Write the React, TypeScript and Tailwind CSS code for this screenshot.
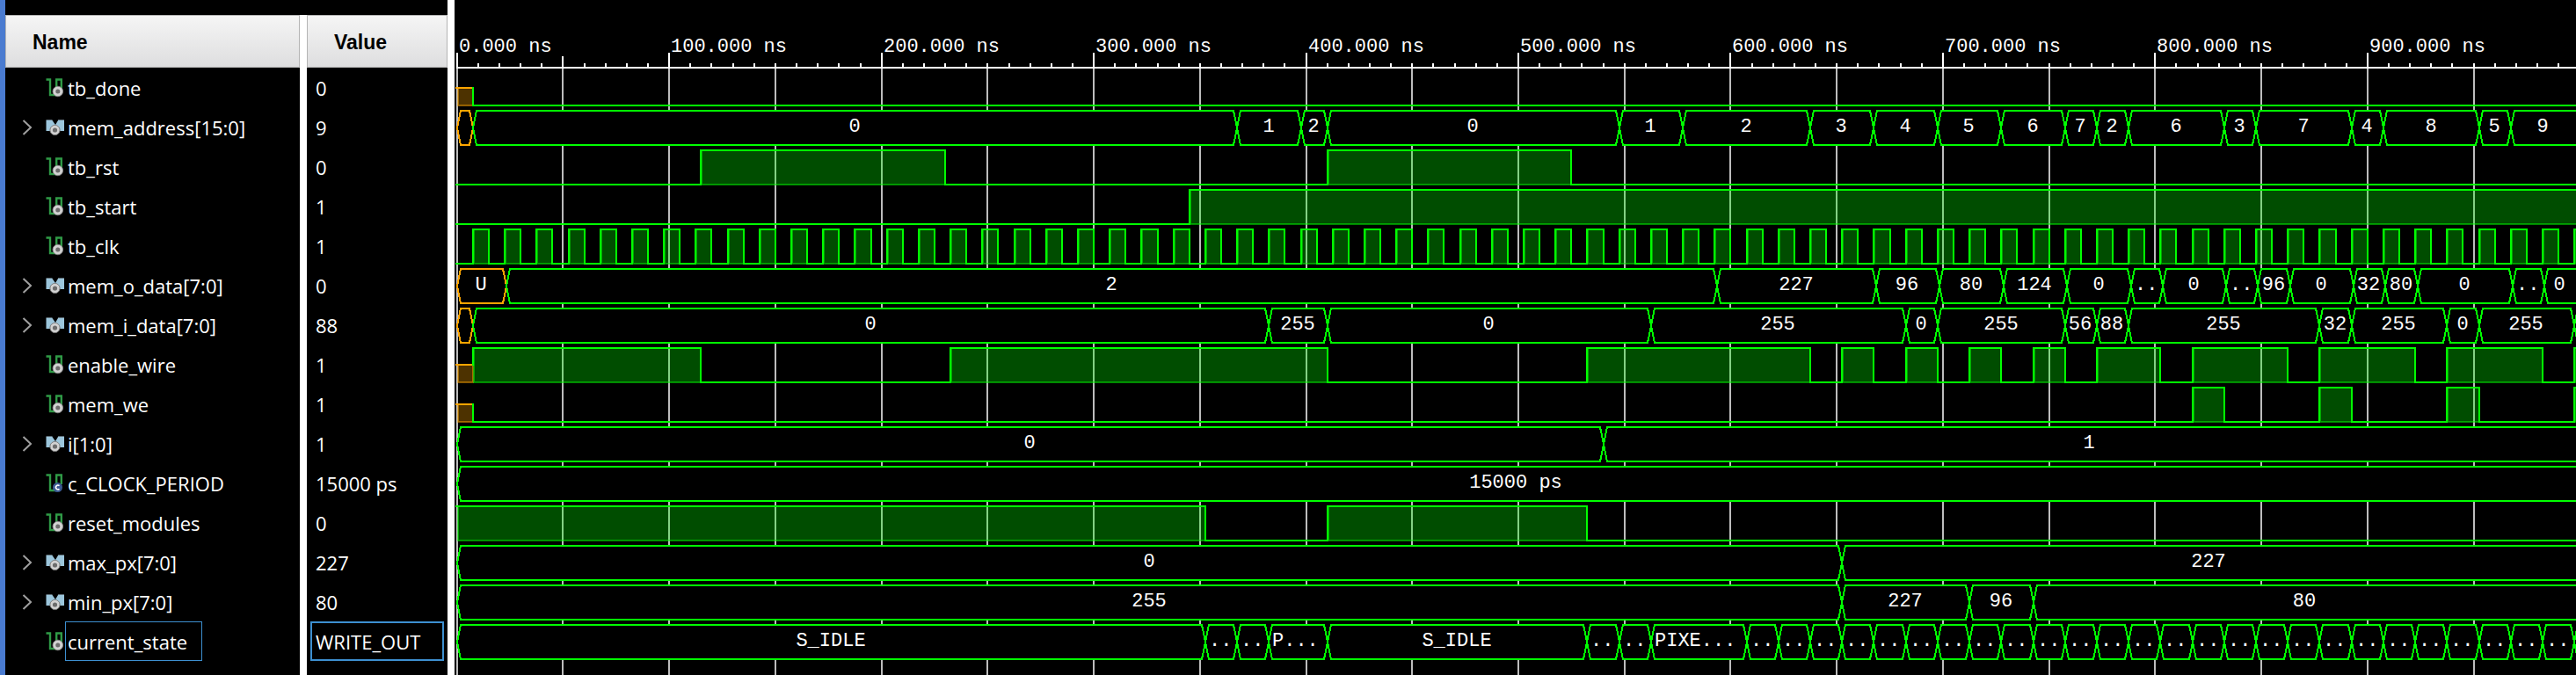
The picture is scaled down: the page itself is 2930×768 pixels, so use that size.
import { useEffect, useRef, useState } from "react";

type Kind = "bit" | "bus" | "const";
type Step = [time: number, value: string];

interface Signal {
  name: string;
  value: string;
  kind: Kind;
  wave: "level" | "bus";
  steps: Step[];
}

const ROW = 45;
const HEAD = 77;
const ORIGIN = 3;
const PX_PER_NS = 2.4145;
const CHAR = 13;

const clock: Step[] = [[0, "0"]];
for (let t = 7.5; t < 1600; t += 15) {
  clock.push([t, "1"], [t + 7.5, "0"]);
}

const states: Step[] = [
  [0, "S_IDLE"],
  [352.5, ".."],
  [367.5, ".."],
  [382.5, "P..."],
  [410, "S_IDLE"],
  [532.5, ".."],
  [547.5, ".."],
  [562.5, "PIXE..."],
];
for (let t = 607.5; t < 1600; t += 15) states.push([t, ".."]);

const signals: Signal[] = [
  { name: "tb_done", value: "0", kind: "bit", wave: "level", steps: [[0, "U"], [7.5, "0"]] },
  {
    name: "mem_address[15:0]", value: "9", kind: "bus", wave: "bus",
    steps: [
      [0, "U"], [7.5, "0"], [367.5, "1"], [397.5, "2"], [410, "0"], [547.5, "1"], [577.5, "2"],
      [637.5, "3"], [667.5, "4"], [697.5, "5"], [727.5, "6"], [757.5, "7"], [772.5, "2"], [787.5, "6"],
      [832.5, "3"], [847.5, "7"], [892.5, "4"], [907.5, "8"], [952.5, "5"], [967.5, "9"],
    ],
  },
  { name: "tb_rst", value: "0", kind: "bit", wave: "level", steps: [[0, "0"], [115, "1"], [230, "0"], [410, "1"], [525, "0"]] },
  { name: "tb_start", value: "1", kind: "bit", wave: "level", steps: [[0, "0"], [345, "1"]] },
  { name: "tb_clk", value: "1", kind: "bit", wave: "level", steps: clock },
  {
    name: "mem_o_data[7:0]", value: "0", kind: "bus", wave: "bus",
    steps: [
      [0, "U"], [23.5, "2"], [593.5, "227"], [668.5, "96"], [698.5, "80"], [728.5, "124"], [758.5, "0"],
      [788.5, ".."], [803.5, "0"], [833.5, ".."], [848.5, "96"], [863.5, "0"], [893.5, "32"],
      [908.5, "80"], [923.5, "0"], [968.5, ".."], [983.5, "0"],
    ],
  },
  {
    name: "mem_i_data[7:0]", value: "88", kind: "bus", wave: "bus",
    steps: [
      [0, "U"], [7.5, "0"], [382.5, "255"], [410, "0"], [562.5, "255"], [682.5, "0"], [697.5, "255"],
      [757.5, "56"], [772.5, "88"], [787.5, "255"], [877.5, "32"], [892.5, "255"], [937.5, "0"],
      [952.5, "255"], [997.5, "88"],
    ],
  },
  {
    name: "enable_wire", value: "1", kind: "bit", wave: "level",
    steps: [
      [0, "U"], [7.5, "1"], [115, "0"], [232.5, "1"], [410, "0"], [532.5, "1"], [637.5, "0"], [652.5, "1"],
      [667.5, "0"], [682.5, "1"], [697.5, "0"], [712.5, "1"], [727.5, "0"], [742.5, "1"], [757.5, "0"],
      [772.5, "1"], [802.5, "0"], [817.5, "1"], [862.5, "0"], [877.5, "1"], [922.5, "0"], [937.5, "1"],
      [982.5, "0"], [997.5, "1"],
    ],
  },
  {
    name: "mem_we", value: "1", kind: "bit", wave: "level",
    steps: [
      [0, "U"], [7.5, "0"], [817.5, "1"], [832.5, "0"], [877.5, "1"], [892.5, "0"], [937.5, "1"],
      [952.5, "0"], [997.5, "1"],
    ],
  },
  { name: "i[1:0]", value: "1", kind: "bus", wave: "bus", steps: [[0, "0"], [540, "1"]] },
  { name: "c_CLOCK_PERIOD", value: "15000 ps", kind: "const", wave: "bus", steps: [[0, "15000 ps"]] },
  { name: "reset_modules", value: "0", kind: "bit", wave: "level", steps: [[0, "1"], [352.5, "0"], [410, "1"], [532.5, "0"]] },
  { name: "max_px[7:0]", value: "227", kind: "bus", wave: "bus", steps: [[0, "0"], [652.5, "227"]] },
  { name: "min_px[7:0]", value: "80", kind: "bus", wave: "bus", steps: [[0, "255"], [652.5, "227"], [712.5, "96"], [742.5, "80"]] },
  { name: "current_state", value: "WRITE_OUT", kind: "bit", wave: "bus", steps: states },
];

const xOf = (ns: number) => Math.floor(ORIGIN + ns * PX_PER_NS + 0.25);

function SignalIcon({ kind }: { kind: Kind }) {
  if (kind === "bus") {
    return (
      <svg viewBox="0 0 22 22" className="h-[22px] w-[22px] shrink-0" aria-hidden="true">
        <path d="M.5 3h7l3.500 5L14 3h7v12h-4.500L10.500 9 5 15H.5Z" fill="#9cc6dc" />
        <path d="M.5 2.500H7.500M14 2.500h7" stroke="#5c6b74" strokeWidth="1.200" />
        <circle cx="10.500" cy="14" r="5.600" fill="#d2d2d2" stroke="#7e7e7e" strokeWidth="1" />
        <circle cx="10.500" cy="14" r="2.600" fill="#6c6c6c" />
      </svg>
    );
  }
  return (
    <svg viewBox="0 0 22 22" className="h-[22px] w-[22px] shrink-0" aria-hidden="true">
      <path d="M.5 1.500H5V19h7.200V1.500h5.600V12" fill="none" stroke="#2f9a46" strokeWidth="2.400" />
      {kind === "const" ? (
        <>
          <circle cx="13.500" cy="15.500" r="5.500" fill="#3b5a92" />
          <path d="M15.500 13.700a2.400 2.400 0 1 0 0 3.600" fill="none" stroke="#fff" strokeWidth="1.600" />
        </>
      ) : (
        <>
          <circle cx="13.800" cy="15" r="5.800" fill="#d2d2d2" stroke="#8a8a8a" strokeWidth=".8" />
          <circle cx="13.800" cy="15" r="2.500" fill="#6c6c6c" />
        </>
      )}
    </svg>
  );
}

function LevelWave({ steps, top, width }: { steps: Step[]; top: number; width: number }) {
  const levels: Record<string, number> = { "0": top + 43, U: top + 23, "1": top + 4 };
  const low = levels["0"];
  return (
    <g>
      {steps.map(([t, v], n) => {
        const x1 = xOf(t);
        if (x1 > width) return null;
        const x2 = n + 1 < steps.length ? xOf(steps[n + 1][0]) : width + 10;
        const y = levels[v];
        const color = v === "U" ? "#ffa500" : "#00ff00";
        const prev = n > 0 ? levels[steps[n - 1][1]] : y;
        return (
          <g key={t} stroke={color} strokeWidth="2">
            {v !== "0" && (
              <rect x={x1 + 1} y={y} width={x2 - x1 - 1} height={low - y} fill={color} fillOpacity=".3" strokeOpacity=".5" />
            )}
            <path d={`M${n > 0 ? x1 : x1 - 1} ${prev}V${y}H${x2}`} fill="none" strokeLinejoin="miter" strokeLinecap="square" />
          </g>
        );
      })}
    </g>
  );
}

function BusWave({ steps, top, width }: { steps: Step[]; top: number; width: number }) {
  const hi = top + 4;
  const lo = top + 43;
  const mid = (hi + lo) / 2;
  return (
    <g shapeRendering="crispEdges">
      {steps.map(([t, v], n) => {
        const x1 = xOf(t);
        if (x1 > width) return null;
        const x2 = n + 1 < steps.length ? xOf(steps[n + 1][0]) : width + 20;
        const seen = Math.min(x2, width) - x1;
        const cut = v.endsWith("..");
        const fits = seen > v.length * CHAR + 6;
        return (
          <g key={t}>
            <path
              d={`M${x1} ${mid}L${x1 + 4} ${hi}H${x2 - 4}L${x2} ${mid}L${x2 - 4} ${lo}H${x1 + 4}Z`}
              fill="#000"
              stroke={v === "U" ? "#ffa500" : "#00ff00"}
              strokeWidth="2"
            />
            {fits && (
              <text
                x={cut ? x1 + 4 : x1 - 1 + Math.round(seen / 2)}
                y={top + 28}
                textAnchor={cut ? "start" : "middle"}
              >
                {v}
              </text>
            )}
          </g>
        );
      })}
    </g>
  );
}

function WavePane() {
  const box = useRef<HTMLElement>(null);
  const [width, setWidth] = useState(2413);

  useEffect(() => {
    const el = box.current;
    if (!el) return;
    const watch = new ResizeObserver(() => setWidth(el.clientWidth));
    watch.observe(el);
    return () => watch.disconnect();
  }, []);

  const ticks: number[] = [];
  for (let t = 0; xOf(t) <= width; t += 10) ticks.push(t);

  return (
    <section ref={box} aria-label="Waveforms" className="min-w-0 flex-1 overflow-hidden bg-black">
      <svg className="block h-full w-full fill-white font-['Liberation_Mono',monospace] text-[22px]">
        {ticks.filter((t) => t % 50 === 0).map((t) => (
          <line key={t} x1={xOf(t)} x2={xOf(t)} y1={HEAD} y2="100%" stroke="#bdbdbd" strokeWidth="2" />
        ))}
        {ticks.map((t) => (
          <line
            key={t}
            x1={xOf(t)}
            x2={xOf(t)}
            y1={t % 100 === 0 ? 60 : t === 50 ? 64 : 72}
            y2={HEAD}
            stroke="#fff"
            strokeWidth="2"
          />
        ))}
        <line x1={ORIGIN - 1} x2="100%" y1={HEAD} y2={HEAD} stroke="#fff" strokeWidth="2" />
        {ticks.filter((t) => t % 100 === 0).map((t) => (
          <text key={t} x={xOf(t) + 2} y="59">
            {`${t}.000 ns`}
          </text>
        ))}
        {signals.map((s, n) =>
          s.wave === "bus" ? (
            <BusWave key={s.name} steps={s.steps} top={HEAD + n * ROW} width={width} />
          ) : (
            <LevelWave key={s.name} steps={s.steps} top={HEAD + n * ROW} width={width} />
          ),
        )}
      </svg>
    </section>
  );
}

function SignalTable() {
  const [selected, setSelected] = useState("current_state");
  const head =
    "h-[60px] border border-[#b4b4b4] bg-linear-to-b from-[#f5f5f5] to-[#dededf] pb-0 pt-0.5 text-left font-['Liberation_Sans',sans-serif] text-[23px] font-bold text-black";

  return (
    <section aria-label="Signals" className="flex w-[503px] shrink-0 flex-col bg-black pt-[17px]">
      <table className="w-full flex-1 table-fixed border-separate border-spacing-0 font-['Open_Sans',sans-serif] text-[22px] text-white">
        <colgroup>
          <col className="w-[335px]" />
          <col className="w-2" />
          <col />
        </colgroup>
        <thead>
          <tr>
            <th scope="col" className={`${head} pl-[30px]`}>Name</th>
            <td className="bg-white" />
            <th scope="col" className={`${head} pl-[30px]`}>Value</th>
          </tr>
        </thead>
        <tbody>
          {signals.map((s) => {
            const active = s.name === selected;
            return (
              <tr key={s.name} onClick={() => setSelected(s.name)}>
                <td className="h-[45px] p-0">
                  <div className="flex h-[45px] items-center pl-[18px]">
                    <span className="flex w-7 shrink-0">
                      {s.kind === "bus" && (
                        <button type="button" aria-label={`Expand ${s.name}`} className="flex">
                          <svg viewBox="0 0 14 20" className="h-5 w-3.5" aria-hidden="true">
                            <path d="m2.500 2 8.500 8-8.500 8" fill="none" stroke="#a0a0a0" strokeWidth="2" />
                          </svg>
                        </button>
                      )}
                    </span>
                    <SignalIcon kind={s.kind} />
                    <span
                      className={`flex h-[45px] items-center border pl-0.5 pr-4 pt-0.5 ${active ? "border-[#3d8fd0]" : "border-transparent"}`}
                    >
                      {s.name}
                    </span>
                  </div>
                </td>
                <td className="bg-white p-0" />
                <td className="px-1 py-0">
                  <span
                    className={`flex h-[45px] items-center border-2 pl-1 pt-0.5 ${active ? "border-[#3d8fd0]" : "border-transparent"}`}
                  >
                    {s.value}
                  </span>
                </td>
              </tr>
            );
          })}
          <tr aria-hidden="true">
            <td className="h-4 p-0" />
            <td className="bg-white p-0" />
            <td className="p-0" />
          </tr>
        </tbody>
      </table>
    </section>
  );
}

export default function App() {
  return (
    <main className="flex min-h-screen overflow-hidden bg-black">
      <div className="w-1.5 shrink-0 bg-[#4a7bd0]" />
      <SignalTable />
      <div className="w-2 shrink-0 bg-white" />
      <WavePane />
    </main>
  );
}
